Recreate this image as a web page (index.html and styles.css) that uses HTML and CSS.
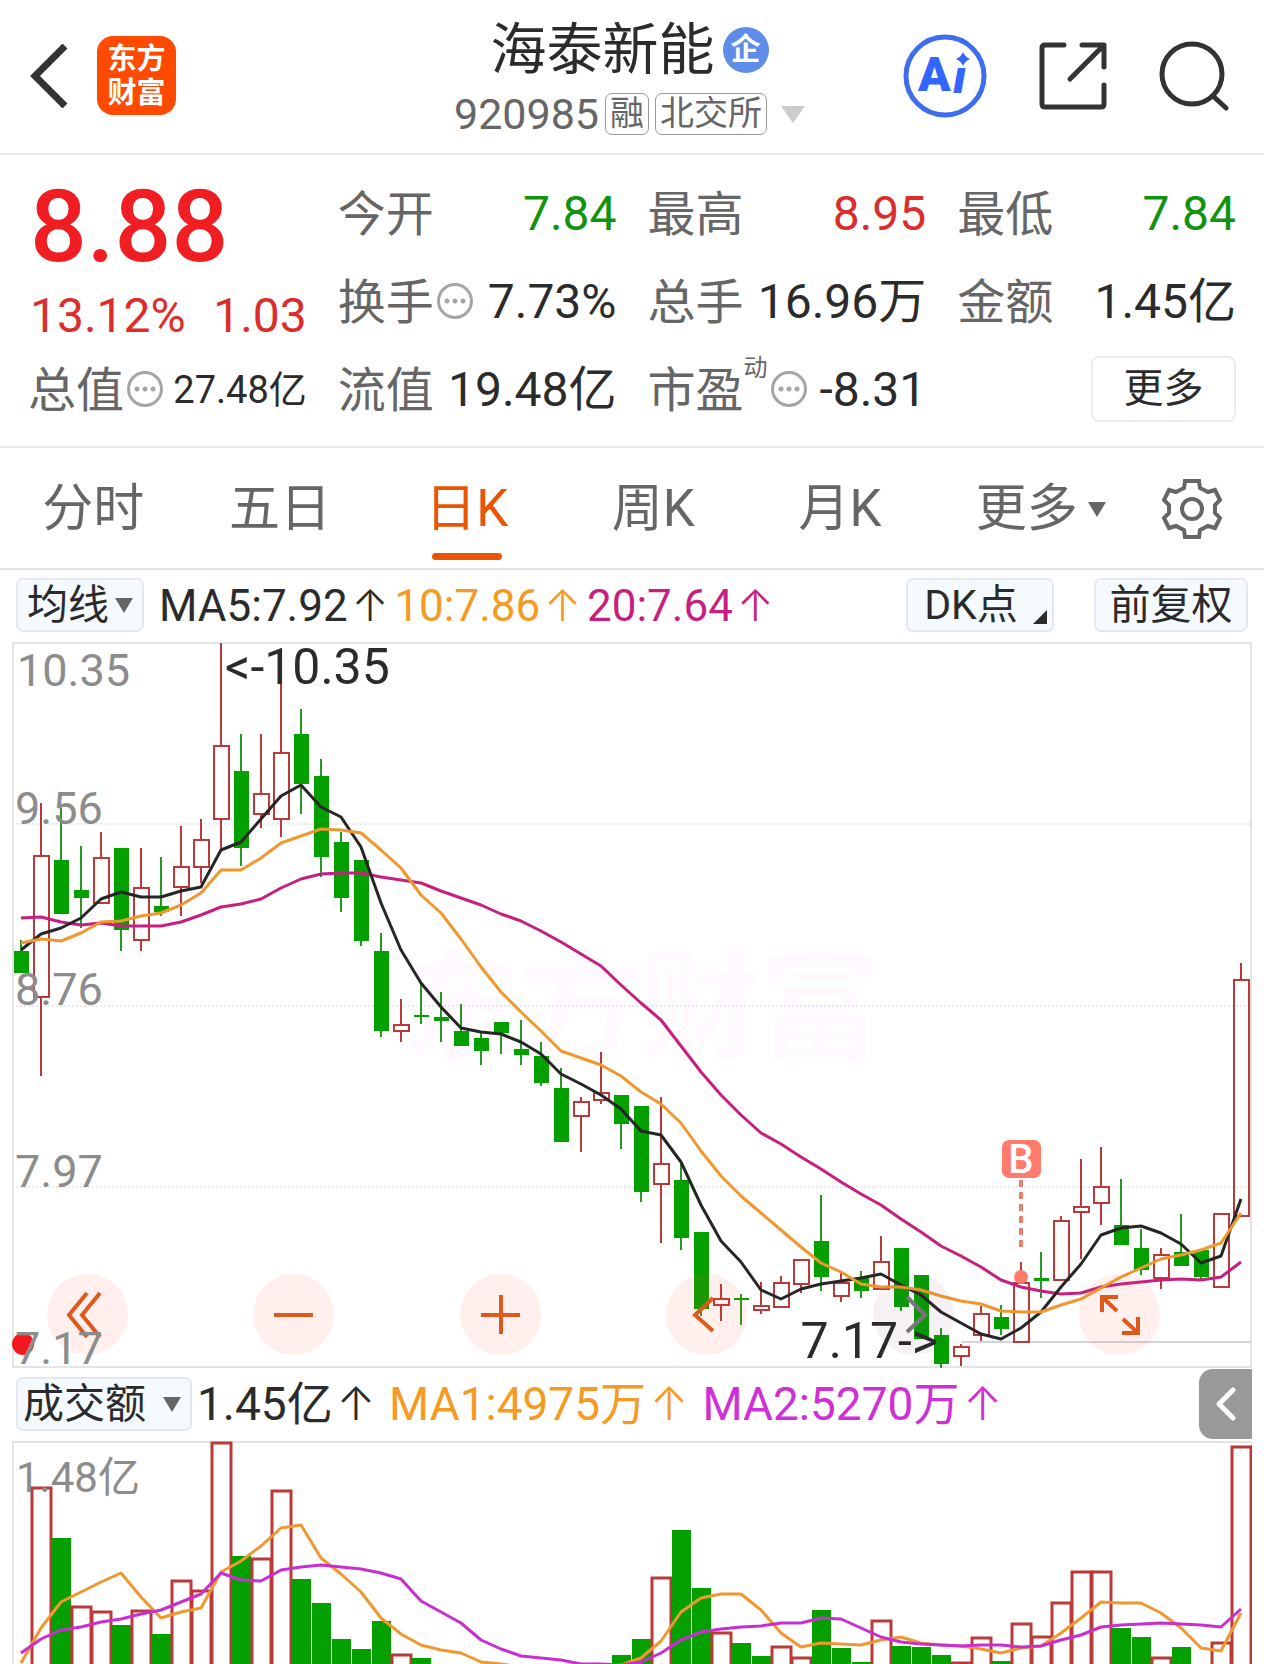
FILE: index.html
```html
<!DOCTYPE html>
<html lang="zh-CN">
<head>
  <meta charset="UTF-8">
  <meta name="viewport" content="width=device-width, initial-scale=1.0">
  <title>海泰新能 920985</title>
  <link rel="stylesheet" href="styles.css">
</head>
<body>
  <header class="header">
    <div class="header-left">
      <button class="icon-btn" type="button" aria-label="返回">
        <svg width="38" height="64" viewBox="0 0 38 64" fill="none" stroke="#333" stroke-width="7"><path d="M35 2 5 32l30 30"/></svg>
      </button>
      <a class="logo" href="#"><span>东方</span><span>财富</span></a>
    </div>

    <div class="header-title">
      <h1>海泰新能<span class="badge">企</span></h1>
      <div class="code-row">
        <span class="code">920985</span>
        <span class="tag">融</span>
        <span class="tag">北交所</span>
        <span class="caret caret-light"></span>
      </div>
    </div>

    <div class="header-right">
      <button class="icon-btn" type="button" aria-label="Ai">
        <svg width="84" height="84" viewBox="0 0 84 84">
          <circle cx="42" cy="42" r="39" fill="none" stroke="#3f6df0" stroke-width="5"/>
          <text class="ai-text" x="15" y="57">A</text>
          <text class="ai-text ai-stem" x="50" y="59">ı</text>
          <path d="M60 18q2 5 7 7-5 2-7 7-2-5-7-7 5-2 7-7z" fill="#3366ff"/>
        </svg>
      </button>
      <button class="icon-btn" type="button" aria-label="分享">
        <svg width="68" height="68" viewBox="0 0 68 68" fill="none" stroke="#333" stroke-width="5" stroke-linecap="round" stroke-linejoin="round">
          <path d="M25 3H6q-3 0-3 3v56q0 3 3 3h56q3 0 3-3V43M43 3h22v22M64 4 31 37"/>
        </svg>
      </button>
      <button class="icon-btn" type="button" aria-label="搜索">
        <svg width="70" height="70" viewBox="0 0 70 70" fill="none" stroke="#333" stroke-width="5" stroke-linecap="round">
          <circle cx="33" cy="33" r="30"/><path d="m54 55 13 12"/>
        </svg>
      </button>
    </div>
  </header>

  <section class="quote">
    <div class="price-box">
      <div class="price">8.88</div>
      <div class="change"><span>13.12%</span><span>1.03</span></div>
    </div>
    <div class="item"><span class="label">今开</span><span class="value down">7.84</span></div>
    <div class="item"><span class="label">最高</span><span class="value up">8.95</span></div>
    <div class="item"><span class="label">最低</span><span class="value down">7.84</span></div>
    <div class="item"><span class="label">换手</span><i class="info"></i><span class="value">7.73%</span></div>
    <div class="item"><span class="label">总手</span><span class="value">16.96万</span></div>
    <div class="item"><span class="label">金额</span><span class="value">1.45亿</span></div>
    <div class="item"><span class="label">总值</span><i class="info"></i><span class="value small">27.48亿</span></div>
    <div class="item"><span class="label">流值</span><span class="value">19.48亿</span></div>
    <div class="item"><span class="label">市盈</span><span class="sup">动</span><i class="info"></i><span class="value">-8.31</span></div>
    <div class="item"><button class="more-btn" type="button">更多</button></div>
  </section>

  <nav class="tabs">
    <button class="tab" type="button">分时</button>
    <button class="tab" type="button">五日</button>
    <button class="tab active" type="button">日K</button>
    <button class="tab" type="button">周K</button>
    <button class="tab" type="button">月K</button>
    <button class="tab tab-more" type="button">更多<span class="caret"></span></button>
    <button class="gear" type="button" aria-label="设置">
      <svg width="60" height="60" viewBox="0 0 60 60" fill="none" stroke="#666" stroke-width="4">
        <path d="M23 2h14l1 7 8 4 7-2 5 10-5 5v8l5 5-5 10-7-2-8 4-1 7H23l-1-7-8-4-7 2-5-10 5-5v-8l-5-5 5-10 7 2 8-4z"/>
        <circle cx="30" cy="30" r="10"/>
      </svg>
    </button>
  </nav>

  <div class="toolbar">
    <div class="select">
      <select aria-label="主图指标"><option>均线</option></select>
    </div>
    <p class="legend">
      <span class="c-black">MA5:7.92<b>↑</b></span>
      <span class="c-orange">10:7.86<b>↑</b></span>
      <span class="c-pink">20:7.64<b>↑</b></span>
    </p>
    <button class="tool-btn dk" type="button">DK点</button>
    <button class="tool-btn" type="button">前复权</button>
  </div>

  <section class="chart">
    <svg id="kline" viewBox="0 0 1240 726">
      <text class="watermark" x="388" y="408">东方财富</text>
      <g class="grid">
        <path d="M0 182h1240M0 364h1240M0 545h1240"/>
      </g>
      <rect class="frame" x="1" y="1" width="1238" height="724"/>
      <path class="last-line" d="M949 700h290"/>
      <circle cx="11" cy="702" r="11" fill="#f5191f"/>
      <g id="candles"></g>
      <g id="price-lines"></g>
      <g class="buy">
        <path d="M1009 538v70"/>
        <circle cx="1009" cy="635" r="7"/>
        <rect x="990" y="498" width="39" height="38" rx="7"/>
        <text x="1009" y="531">B</text>
      </g>
    </svg>
    <div class="controls">
      <button type="button" aria-label="最左"><svg viewBox="0 0 81 81"><path d="M40 19 22 41l18 22M53 19 35 41l18 22"/></svg></button>
      <button type="button" aria-label="缩小"><svg viewBox="0 0 81 81"><path d="M21 41h39"/></svg></button>
      <button type="button" aria-label="放大"><svg viewBox="0 0 81 81"><path d="M21 41h39M41 21v39"/></svg></button>
      <button type="button" aria-label="左移"><svg viewBox="0 0 81 81"><path d="M47 24 29 41l18 16"/></svg></button>
      <button type="button" aria-label="右移" disabled><svg viewBox="0 0 81 81"><path d="m34 23 18 18-18 17"/></svg></button>
      <button type="button" aria-label="全屏"><svg viewBox="0 0 81 81"><path d="M23 38V23h16M24 24l14 13M59 43v16H43M58 58 44 45"/></svg></button>
    </div>
    <svg class="labels" viewBox="0 0 1240 726">
      <g class="axis">
        <text x="5" y="44">10.35</text>
        <text x="3" y="182">9.56</text>
        <text x="3" y="363">8.76</text>
        <text x="3" y="545">7.97</text>
        <text x="3" y="722">7.17</text>
      </g>
      <g class="note">
        <text x="213" y="42">&lt;-10.35</text>
        <text x="926" y="716" text-anchor="end">7.17-&gt;</text>
      </g>
    </svg>
  </section>

  <div class="toolbar toolbar-volume">
    <div class="select wide">
      <select aria-label="副图指标"><option>成交额</option></select>
    </div>
    <p class="legend">
      <span class="c-black">1.45亿<b>↑</b></span>
      <span class="c-orange">MA1:4975万<b>↑</b></span>
      <span class="c-purple">MA2:5270万<b>↑</b></span>
    </p>
    <button class="drawer" type="button" aria-label="展开">
      <svg width="20" height="34" viewBox="0 0 20 34" fill="none" stroke="#fff" stroke-width="5" stroke-linecap="round" stroke-linejoin="round"><path d="M17 3 3 17l14 14"/></svg>
    </button>
  </div>

  <section class="chart">
    <svg id="volume" viewBox="0 0 1240 223">
      <path class="frame" d="M1 223V1h1238v222"/>
      <g id="bars"></g>
      <g id="volume-lines"></g>
      <text class="axis axis-volume" x="4" y="51">1.48亿</text>
    </svg>
  </section>

  <script>
    const STEP = 20;
    const FIRST = 9;

    // [high, body top, body bottom, low, rising]
    const candles = [
      [298, 309, 331, 331, 0], [161, 213, 355, 434, 1], [166, 218, 272, 272, 0], [204, 248, 256, 286, 0],
      [190, 215, 261, 261, 1], [206, 206, 288, 309, 0], [206, 245, 298, 309, 1], [215, 264, 270, 274, 0],
      [184, 224, 245, 274, 1], [177, 197, 225, 241, 1], [1, 103, 177, 208, 1], [92, 129, 206, 224, 0],
      [92, 151, 172, 186, 1], [17, 110, 177, 195, 1], [67, 92, 142, 172, 0], [117, 134, 215, 235, 0],
      [190, 200, 256, 270, 0], [218, 218, 299, 304, 0], [291, 309, 389, 395, 0], [357, 382, 389, 400, 1],
      [340, 373, 375, 382, 0], [350, 375, 379, 400, 0], [362, 389, 404, 404, 0], [391, 396, 409, 423, 0],
      [380, 380, 391, 412, 0], [378, 407, 413, 423, 0], [400, 414, 441, 444, 0], [426, 446, 500, 500, 0],
      [455, 459, 474, 510, 1], [410, 450, 458, 462, 1], [453, 453, 482, 507, 0], [464, 464, 550, 560, 0],
      [455, 521, 542, 601, 1], [520, 538, 596, 608, 0], [590, 590, 667, 674, 0], [642, 656, 663, 679, 1],
      [652, 656, 658, 683, 0], [640, 663, 668, 672, 1], [634, 640, 665, 665, 1], [617, 617, 642, 651, 1],
      [553, 599, 635, 649, 0], [630, 640, 654, 660, 1], [629, 636, 649, 656, 0], [594, 619, 647, 647, 1],
      [606, 606, 665, 669, 0], [633, 633, 697, 697, 0], [686, 693, 722, 726, 0], [702, 704, 714, 724, 1],
      [664, 671, 693, 699, 1], [663, 675, 687, 693, 0], [620, 640, 700, 700, 1], [610, 636, 639, 656, 0],
      [574, 578, 638, 638, 1], [517, 564, 570, 617, 1], [505, 544, 561, 583, 1], [537, 583, 603, 603, 0],
      [587, 606, 628, 633, 0], [606, 612, 636, 647, 1], [572, 610, 624, 624, 0], [608, 608, 635, 638, 0],
      [571, 571, 645, 645, 1], [321, 337, 574, 574, 1]
    ];

    const priceLines = {
      pink: [276, 275, 280, 283, 281, 284, 284, 284, 280, 273, 265, 262, 257, 246, 237, 232, 231, 231, 235, 238,
        241, 249, 256, 263, 272, 279, 289, 300, 312, 324, 343, 361, 378, 404, 430, 453, 473, 491, 502, 515,
        527, 540, 552, 563, 577, 590, 604, 614, 625, 638, 645, 649, 652, 651, 645, 642, 640, 638, 637, 638, 635, 620],
      black: [308, 292, 286, 276, 257, 250, 255, 255, 249, 245, 208, 200, 177, 154, 143, 165, 175, 205, 261, 308,
        341, 365, 386, 390, 392, 400, 412, 432, 442, 453, 467, 489, 493, 520, 563, 599, 620, 648, 657, 647,
        642, 639, 636, 632, 643, 653, 670, 681, 692, 697, 686, 670, 645, 622, 593, 586, 584, 591, 602, 621, 614, 557],
      orange: [301, 297, 299, 291, 280, 279, 274, 271, 263, 251, 228, 228, 216, 201, 194, 187, 188, 191, 208, 226,
        253, 271, 297, 325, 350, 370, 389, 409, 416, 423, 434, 450, 462, 481, 509, 534, 554, 571, 588, 605,
        621, 630, 642, 645, 645, 648, 654, 659, 662, 669, 670, 670, 663, 657, 646, 635, 626, 617, 613, 608, 601, 571]
    };

    // top edge of every volume bar
    const volumes = [230, 46, 97, 165, 170, 184, 169, 193, 139, 149, 1, 115, 117, 49, 138, 162, 198, 208, 180, 213,
      217, 230, 230, 230, 230, 230, 230, 230, 230, 230, 214, 198, 136, 89, 147, 191, 202, 215, 205, 216,
      169, 207, 221, 179, 205, 206, 214, 221, 196, 220, 182, 195, 161, 130, 130, 187, 196, 216, 206, 230, 201, 5];

    // days whose volume colour differs from the candle
    const flipped = [3, 37, 41, 51];

    const volumeLines = {
      orange: [222, 187, 161, 151, 141, 132, 156, 177, 171, 167, 131, 120, 105, 87, 84, 117, 133, 151, 177, 193,
        204, 209, 212, 221, 223, 226, 227, 227, 227, 227, 224, 217, 200, 171, 157, 153, 153, 169, 192, 206,
        202, 203, 204, 199, 196, 202, 204, 205, 208, 212, 207, 205, 192, 177, 161, 162, 162, 172, 187, 207, 210, 172],
      purple: [212, 198, 189, 186, 181, 178, 173, 169, 161, 153, 132, 139, 140, 129, 126, 124, 126, 128, 132, 138,
        160, 171, 182, 199, 208, 215, 217, 219, 223, 223, 224, 221, 212, 199, 191, 188, 186, 185, 182, 182,
        177, 178, 187, 196, 201, 203, 204, 205, 204, 204, 206, 205, 199, 194, 186, 184, 183, 182, 183, 184, 186, 168]
    };

    const xAt = (i) => FIRST + i * STEP;

    function drawCandles() {
      document.getElementById('candles').innerHTML = candles.map(([high, top, bottom, low, rising], i) => {
        const x = xAt(i);
        if (rising) {
          return `<path class="rise" d="M${x} ${high}V${top}M${x} ${bottom}V${low}"/>
            <rect class="rise" x="${x - 7}" y="${top + 1}" width="15" height="${bottom - top - 1}"/>`;
        }
        return `<path class="fall-wick" d="M${x} ${high}V${low}"/>
          <rect class="fall" x="${x - 7}" y="${top}" width="15" height="${bottom - top}"/>`;
      }).join('');
    }

    function drawVolumes() {
      document.getElementById('bars').innerHTML = volumes.map((top, i) => {
        const x = xAt(i);
        const rising = Boolean(candles[i][4]) !== flipped.includes(i);
        if (rising) {
          return `<rect class="rise bar" x="${x - 9}" y="${top + 1}" width="19" height="240"/>`;
        }
        return `<rect class="fall" x="${x - 9}" y="${top}" width="19" height="240"/>`;
      }).join('');
    }

    function drawLines(id, lines) {
      document.getElementById(id).innerHTML = Object.keys(lines).map((color) => {
        const points = lines[color].map((y, i) => `${xAt(i)},${y}`).join(' ');
        return `<polyline class="line line-${color}" points="${points}"/>`;
      }).join('');
    }

    drawCandles();
    drawVolumes();
    drawLines('price-lines', priceLines);
    drawLines('volume-lines', volumeLines);
  </script>
</body>
</html>
```

FILE: styles.css
```css
* {
  box-sizing: border-box;
}

body {
  margin: 0;
  background: #fff;
  color: #2b2b2b;
  font-family: Roboto, "Noto Sans CJK SC", sans-serif;
  overflow-x: hidden;
}

button,
select {
  margin: 0;
  padding: 0;
  border: none;
  background: none;
  color: inherit;
  font-family: inherit;
  cursor: pointer;
}

svg {
  display: block;
}

/* header */

.header {
  display: grid;
  grid-template-columns: 1fr auto 1fr;
  align-items: center;
  height: 155px;
  padding: 0 35px 2px 30px;
  border-bottom: 2px solid #e6e6e8;
}

.header-left,
.header-right {
  display: flex;
  align-items: center;
}

.header-left {
  gap: 29px;
}

.header-right {
  justify-content: flex-end;
  gap: 52px;
}

.logo {
  display: flex;
  flex-direction: column;
  justify-content: center;
  align-items: center;
  width: 79px;
  height: 79px;
  border-radius: 16px;
  background: #ff4a00;
  color: #fff;
  font-size: 29px;
  font-weight: 700;
  line-height: 34px;
  text-decoration: none;
}

.header-title {
  display: flex;
  flex-direction: column;
  align-items: center;
  padding-top: 5px;
}

h1 {
  display: flex;
  align-items: center;
  gap: 8px;
  margin: 0;
  font-size: 56px;
  font-weight: 400;
  line-height: 72px;
}

.badge {
  width: 46px;
  height: 46px;
  border-radius: 50%;
  background: #5f8ce8;
  color: #fff;
  font-size: 30px;
  font-weight: 700;
  line-height: 44px;
  text-align: center;
}

.code-row {
  display: flex;
  align-items: center;
  gap: 6px;
  color: #666;
  line-height: 56px;
}

.code {
  font-size: 43px;
}

.tag {
  height: 42px;
  padding: 0 4px;
  border: 1px solid #999;
  border-radius: 7px;
  font-size: 34px;
  line-height: 38px;
}

.caret {
  width: 0;
  border: 9px solid transparent;
  border-top: 15px solid #666;
  border-bottom: none;
}

.caret-light {
  margin-left: 8px;
  border-width: 17px 12px 0;
  border-top-color: #ccc;
}

.ai-text {
  fill: #3366ff;
  font-size: 48px;
  font-weight: 900;
}

.ai-stem {
  font-style: italic;
}

/* quote */

.quote {
  display: grid;
  grid-template-columns: repeat(4, 1fr);
  grid-auto-rows: 88px;
  column-gap: 31px;
  padding: 14px 28px 13px;
  border-bottom: 2px solid #e6e6ec;
}

.price-box {
  grid-row: span 2;
  padding-left: 2px;
  color: #f01e23;
}

.price {
  padding-top: 8px;
  font-size: 100px;
  font-weight: 500;
  line-height: 100px;
}

.change {
  display: flex;
  justify-content: space-between;
  color: #dc2d2d;
  font-size: 48px;
  line-height: 78px;
}

.item {
  display: flex;
  align-items: center;
  line-height: 88px;
}

.label {
  padding-top: 4px;
  color: #666;
  font-size: 48px;
}

.value {
  margin-left: auto;
  padding-top: 2px;
  font-size: 48px;
}

.small {
  font-size: 38px;
}

.up {
  color: #dc2d2d;
}

.down {
  color: #12930f;
}

.sup {
  align-self: flex-start;
  color: #666;
  font-size: 24px;
  line-height: 46px;
}

.info {
  width: 36px;
  height: 36px;
  margin-left: 3px;
  border: 3px solid #a5a5a5;
  border-radius: 50%;
  background: radial-gradient(circle, #a5a5a5 2px, transparent 3px) center / 8px 8px no-repeat,
    radial-gradient(circle, #a5a5a5 2px, transparent 3px) 3px center / 8px 8px no-repeat,
    radial-gradient(circle, #a5a5a5 2px, transparent 3px) 19px center / 8px 8px no-repeat;
}

.more-btn {
  width: 145px;
  height: 66px;
  margin-left: auto;
  border: 2px solid #ececee;
  border-radius: 8px;
  font-size: 40px;
  line-height: 56px;
}

/* tabs */

.tabs {
  display: grid;
  grid-template-columns: repeat(6, 1fr) 144px;
  height: 122px;
  border-bottom: 2px solid #e2e2ea;
}

.tab {
  position: relative;
  color: #666;
  font-size: 51px;
  line-height: 122px;
}

.tab-more {
  display: flex;
  justify-content: center;
  align-items: center;
  gap: 10px;
  padding-left: 28px;
}

.active {
  color: #ea5504;
}

.active::after {
  content: "";
  position: absolute;
  bottom: 10px;
  left: 50%;
  width: 70px;
  height: 7px;
  margin-left: -35px;
  border-radius: 4px;
  background: #ea5504;
}

.gear {
  display: flex;
  justify-content: center;
  align-items: center;
}

/* toolbars */

.toolbar {
  display: flex;
  align-items: center;
  height: 72px;
  padding: 0 16px 2px;
}

.select {
  position: relative;
  width: 128px;
}

.wide {
  width: 176px;
}

.select::after {
  content: "";
  position: absolute;
  top: 20px;
  right: 11px;
  border: 9px solid transparent;
  border-top: 15px solid #666;
  border-bottom: none;
  pointer-events: none;
}

.select select,
.tool-btn {
  height: 54px;
  border: 2px solid #e4e8f0;
  border-radius: 7px;
  background: #f5faff;
  font-size: 41px;
  line-height: 46px;
}

.select select {
  width: 100%;
  padding-left: 9px;
  appearance: none;
}

.wide select {
  padding-left: 5px;
}

.legend {
  display: flex;
  flex: 1;
  gap: 6px;
  margin: 0 0 0 15px;
  font-size: 44px;
  line-height: 54px;
  white-space: nowrap;
}

.legend b {
  margin-left: 4px;
  font-family: Inter, sans-serif;
  font-weight: 300;
}

.tool-btn {
  position: relative;
  width: 154px;
}

.dk {
  width: 148px;
  margin-right: 40px;
  padding-right: 18px;
}

.dk::after {
  content: "";
  position: absolute;
  right: 5px;
  bottom: 6px;
  border-bottom: 14px solid #2b2b2b;
  border-left: 14px solid transparent;
}

.toolbar-volume {
  height: 73px;
  padding-right: 12px;
}

.toolbar-volume .legend {
  gap: 14px;
  margin-left: 5px;
  font-size: 46px;
}

.drawer {
  display: flex;
  justify-content: center;
  align-items: center;
  width: 53px;
  height: 70px;
  border-radius: 14px 0 0 14px;
  background: #9b989b;
}

.c-black {
  color: #2b2b2b;
}

.c-orange {
  color: #f59a23;
}

.c-pink {
  color: #c71f80;
}

.c-purple {
  color: #cf2fd6;
}

/* charts */

.chart {
  position: relative;
  margin: 0 12px;
}

.chart > svg {
  width: 100%;
  height: auto;
}

.chart > .labels {
  position: absolute;
  top: 0;
  left: 0;
  pointer-events: none;
}

.frame {
  fill: none;
  stroke: #e4e4e4;
  stroke-width: 2;
}

.grid path {
  stroke: #d4d4d4;
  stroke-dasharray: 2 2;
}

.last-line {
  stroke: #d3d3da;
  stroke-width: 2;
}

.watermark {
  fill: #fefaff;
  font-size: 120px;
  font-weight: 700;
}

.rise {
  fill: none;
  stroke: #b93a38;
  stroke-width: 2;
}

.bar {
  stroke-width: 3;
}

.fall {
  fill: #04a000;
}

.fall-wick {
  stroke: #259a20;
  stroke-width: 2;
}

.line {
  fill: none;
  stroke-width: 3;
  stroke-linejoin: round;
}

.line-black {
  stroke: #262626;
}

.line-orange {
  stroke: #f0982f;
}

.line-pink {
  stroke: #c71f80;
}

.line-purple {
  stroke: #c92fd0;
}

.axis {
  fill: #8c8c8c;
  font-size: 45px;
}

.axis-volume {
  font-size: 42px;
}

.note {
  fill: #2b2b2b;
  font-size: 50px;
}

.buy path {
  stroke: #e8806f;
  stroke-width: 4;
  stroke-dasharray: 7 5;
}

.buy circle,
.buy rect {
  fill: #ff7b6c;
}

.buy text {
  fill: #fff;
  font-size: 40px;
  font-weight: 500;
  text-anchor: middle;
}

.controls {
  position: absolute;
  right: 92px;
  bottom: 13px;
  left: 35px;
  display: flex;
  justify-content: space-between;
}

.controls button {
  width: 81px;
  height: 81px;
  border-radius: 50%;
  background: rgba(255, 90, 50, 0.09);
}

.controls button:disabled {
  background: rgba(110, 60, 120, 0.07);
}

.controls path {
  fill: none;
  stroke: #dd5a1c;
  stroke-width: 4;
}

.controls button:disabled path {
  stroke: #777;
}
```
